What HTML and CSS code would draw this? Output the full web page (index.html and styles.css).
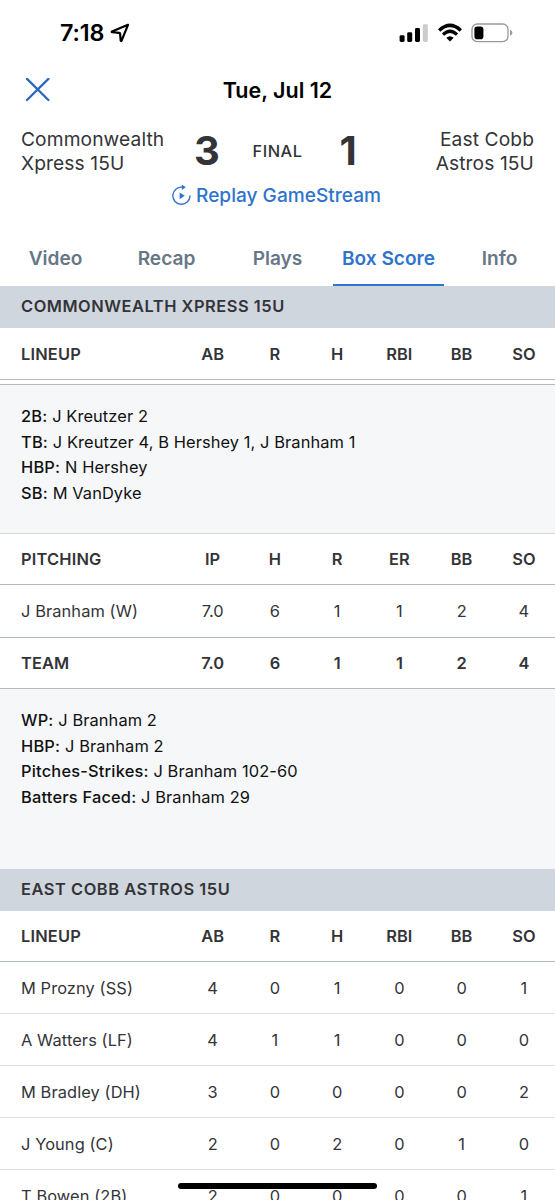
FILE: index.html
```html
<!DOCTYPE html>
<html lang="en">
<head>
    <meta charset="UTF-8">
    <meta name="viewport" content="width=device-width, initial-scale=1.0">
    <title>Box Score</title>
    <link rel="stylesheet" href="styles.css">
</head>
<body>
    <!-- Status bar -->
    <div class="status-bar">
        <div class="status-left">
            <span class="time">7:18</span>
            <svg class="location" width="20" height="20" viewBox="0 0 20 20">
                <path d="M18 1.8 L2 8.4 Q1.4 9 2.2 9.2 L9.2 9.8 Q10 9.9 10.1 10.7 L10.7 17.6 Q11.1 18.4 11.6 17.6 Z" fill="none" stroke="#000" stroke-width="2.2" stroke-linejoin="round"/>
            </svg>
        </div>
        <div class="status-right">
            <svg width="30" height="20" viewBox="0 0 30 20">
                <rect x="0.6" y="12.2" width="5" height="6.8" rx="1.4"/>
                <rect x="8.2" y="9.2" width="5" height="9.8" rx="1.4"/>
                <rect x="16" y="5" width="5" height="14" rx="1.4"/>
                <rect x="23.8" y="1.2" width="5" height="17.8" rx="1.4" fill="#ccc"/>
            </svg>
            <svg width="26" height="20" viewBox="0 0 26 20">
                <path d="M2.2 7.4 Q13 -2.6 23.8 7.4" fill="none" stroke="#000" stroke-width="3.4"/>
                <path d="M6 11.6 Q13 5 20 11.6" fill="none" stroke="#000" stroke-width="3.2"/>
                <path d="M9.3 14.8 Q13 11.6 16.7 14.8 L13 18.6 Z"/>
            </svg>
            <svg width="42" height="20" viewBox="0 0 42 20">
                <rect x="1" y="1" width="36" height="17.6" rx="5.2" fill="none" stroke="#999" stroke-width="1.3"/>
                <rect x="3.4" y="3.4" width="9" height="12.8" rx="2.8"/>
                <path d="M39 6.8 Q41.4 7.6 41.4 9.8 T39 12.8 Z" fill="#999"/>
            </svg>
        </div>
    </div>

    <!-- Title row -->
    <div class="title-row">
        <svg class="close" width="25" height="24" viewBox="0 0 25 24">
            <path d="M2 0.9 L23.4 22 M23.4 0.9 L2 22" stroke="#2b68be" stroke-width="2.3" stroke-linecap="round"/>
        </svg>
        <h1>Tue, Jul 12</h1>
    </div>

    <!-- Game score -->
    <div class="score">
        <div class="team">Commonwealth<br>Xpress 15U</div>
        <div class="points">3</div>
        <div class="final">FINAL</div>
        <div class="points">1</div>
        <div class="team away">East Cobb<br>Astros 15U</div>
    </div>
    <div class="replay">
        <svg width="20" height="22" viewBox="0 0 20 22">
            <path d="M10.6 3.2 A8.6 8.6 0 1 0 18 12" fill="none" stroke="#2f74cc" stroke-width="1.4" stroke-linecap="round"/>
            <path d="M9.8 0.5 L13.8 3.2 L9.8 5.9 Z" fill="#2f74cc"/>
            <path d="M7.6 8.4 L12.8 11.8 L7.6 15.2 Z" fill="#2f74cc"/>
        </svg>
        <span>Replay GameStream</span>
    </div>

    <!-- Tabs -->
    <div class="tabs">
        <div class="tab">Video</div>
        <div class="tab">Recap</div>
        <div class="tab">Plays</div>
        <div class="tab active">Box Score</div>
        <div class="tab">Info</div>
    </div>

    <!-- Commonwealth Xpress -->
    <h2>COMMONWEALTH XPRESS 15U</h2>
    <div class="row head first">
        <span>LINEUP</span><span>AB</span><span>R</span><span>H</span><span>RBI</span><span>BB</span><span>SO</span>
    </div>
    <div class="sliver"></div>
    <div class="notes batting">
        <p><b>2B:</b> J Kreutzer 2</p>
        <p><b>TB:</b> J Kreutzer 4, B Hershey 1, J Branham 1</p>
        <p><b>HBP:</b> N Hershey</p>
        <p><b>SB:</b> M VanDyke</p>
    </div>
    <div class="row head">
        <span>PITCHING</span><span>IP</span><span>H</span><span>R</span><span>ER</span><span>BB</span><span>SO</span>
    </div>
    <div class="row last">
        <span>J Branham (W)</span><span>7.0</span><span>6</span><span>1</span><span>1</span><span>2</span><span>4</span>
    </div>
    <div class="row total">
        <span>TEAM</span><span>7.0</span><span>6</span><span>1</span><span>1</span><span>2</span><span>4</span>
    </div>
    <div class="notes pitching">
        <p><b>WP:</b> J Branham 2</p>
        <p><b>HBP:</b> J Branham 2</p>
        <p><b>Pitches-Strikes:</b> J Branham 102-60</p>
        <p><b>Batters Faced:</b> J Branham 29</p>
    </div>

    <!-- East Cobb Astros -->
    <h2>EAST COBB ASTROS 15U</h2>
    <div class="row head">
        <span>LINEUP</span><span>AB</span><span>R</span><span>H</span><span>RBI</span><span>BB</span><span>SO</span>
    </div>
    <div class="row">
        <span>M Prozny (SS)</span><span>4</span><span>0</span><span>1</span><span>0</span><span>0</span><span>1</span>
    </div>
    <div class="row">
        <span>A Watters (LF)</span><span>4</span><span>1</span><span>1</span><span>0</span><span>0</span><span>0</span>
    </div>
    <div class="row">
        <span>M Bradley (DH)</span><span>3</span><span>0</span><span>0</span><span>0</span><span>0</span><span>2</span>
    </div>
    <div class="row">
        <span>J Young (C)</span><span>2</span><span>0</span><span>2</span><span>0</span><span>1</span><span>0</span>
    </div>
    <div class="row">
        <span>T Bowen (2B)</span><span>2</span><span>0</span><span>0</span><span>0</span><span>0</span><span>1</span>
    </div>

    <div class="home-indicator"></div>
</body>
</html>
```
FILE: styles.css
```css
* {
    box-sizing: border-box;
}
body {
    font-family: Inter, "Liberation Sans", sans-serif;
    background-color: #fff;
    color: #333438;
    margin: 0;
    height: 1200px;
    overflow: hidden;
}
h1, h2, p {
    margin: 0;
}
svg {
    display: block;
}

/* Status bar */
.status-bar {
    display: flex;
    justify-content: space-between;
    height: 67px;
    padding: 23px 42px 0 60px;
    color: #000;
}
.status-left, .status-right {
    display: flex;
    height: 20px;
    align-items: center;
}
.status-left {
    gap: 6px;
}
.status-right {
    gap: 8px;
}
.time {
    font-size: 23.3px;
    font-weight: 600;
    line-height: 20px;
    letter-spacing: -0.1px;
}

/* Title row */
.title-row {
    display: grid;
    grid-template-columns: 25px 1fr 25px;
    align-items: center;
    height: 45px;
    padding: 0 25px;
}
h1 {
    font-size: 21.5px;
    font-weight: 600;
    line-height: 28px;
    text-align: center;
    color: #000;
}

/* Score */
.score {
    display: flex;
    align-items: center;
    height: 68px;
    padding: 10px 21px 0;
}
.team {
    width: 164px;
    font-size: 19.2px;
    line-height: 24px;
    letter-spacing: 0.1px;
}
.away {
    text-align: right;
}
.points {
    width: 44px;
    font-size: 40px;
    font-weight: 700;
    line-height: 48px;
    text-align: center;
}
.final {
    width: 97px;
    font-size: 16.4px;
    font-weight: 500;
    letter-spacing: 0.5px;
    text-align: center;
}
.replay {
    display: flex;
    justify-content: center;
    align-items: center;
    gap: 4px;
    height: 30px;
    padding-right: 2px;
    font-size: 19.1px;
    font-weight: 500;
    color: #2f74cc;
}

/* Tabs */
.tabs {
    display: grid;
    grid-template-columns: repeat(5, 1fr);
    height: 76px;
    padding-top: 21px;
}
.tab {
    height: 55px;
    font-size: 19.1px;
    font-weight: 600;
    line-height: 54px;
    text-align: center;
    color: #687786;
}
.active {
    color: #2f74cc;
    border-bottom: 2px solid #2f74cc;
}

/* Box score */
h2 {
    height: 42px;
    padding-left: 21px;
    background-color: #d0d6de;
    font-size: 16.4px;
    font-weight: 600;
    line-height: 41px;
    letter-spacing: 0.55px;
}
.row {
    display: grid;
    grid-template-columns: 1fr repeat(6, 62.25px);
    align-items: center;
    height: 52px;
    border-bottom: 1px solid #dde2e8;
    font-size: 16.4px;
}
.row span {
    text-align: center;
}
.row span:first-child {
    padding-left: 21px;
    text-align: left;
    letter-spacing: 0.1px;
    white-space: nowrap;
}
.head {
    height: 51px;
    border-bottom: 1px solid #b3bac5;
    font-weight: 600;
}
.head span:first-child {
    letter-spacing: 0.2px;
}
.first {
    height: 52px;
}
.last {
    height: 53px;
    border-bottom: 1px solid #b3bac5;
}
.total {
    height: 51px;
    border-bottom: 1px solid #b3bac5;
    font-weight: 600;
}
.sliver {
    height: 5px;
    border-bottom: 1px solid #b3bac5;
}
.notes {
    padding: 19px 21px 0;
    background-color: #f5f7f9;
    font-size: 16.4px;
    line-height: 25.5px;
    letter-spacing: 0.1px;
    color: #111;
}
.notes b {
    font-weight: 500;
    letter-spacing: 0.2px;
}
.batting {
    height: 149px;
    border-bottom: 1px solid #d3d8df;
}
.pitching {
    height: 180px;
}

/* Home indicator over the list */
.home-indicator {
    position: absolute;
    left: 178px;
    top: 1183px;
    width: 199px;
    height: 6px;
    border-radius: 3px;
    background-color: #000;
}
```
